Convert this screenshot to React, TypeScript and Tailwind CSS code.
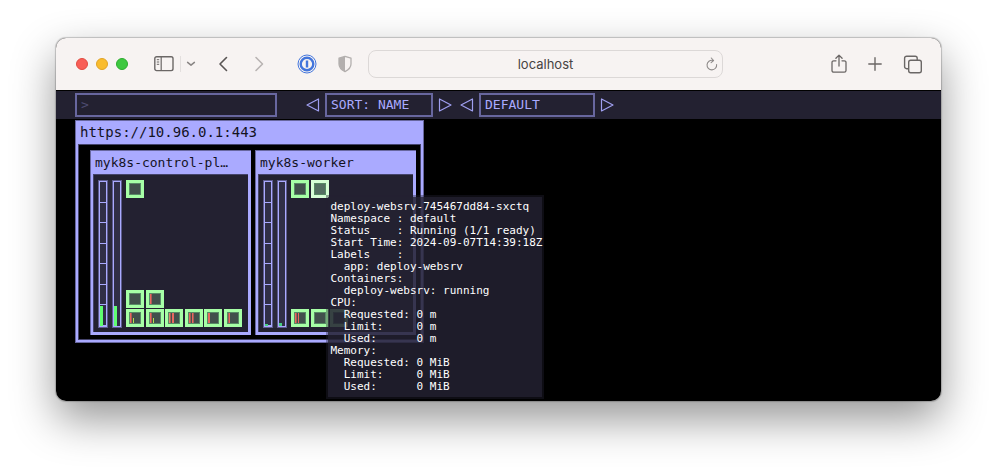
import type { ReactNode } from 'react';

type Stripe = { x: number; h: number; color: string };
type PodInfo = { id: string; stripes?: Stripe[]; active?: boolean };

const RED = '#e8685f';
const DIM_RED = '#a65a55';
const LIME = '#b4e04c';

const controlPlaneRows: PodInfo[][] = [
  [{ id: 'kube-proxy' }, { id: 'flannel', stripes: [{ x: 0, h: 12, color: RED }, { x: 1, h: 12, color: DIM_RED }] }],
  [
    { id: 'apiserver', stripes: [{ x: 0, h: 12, color: RED }, { x: 1, h: 12, color: DIM_RED }, { x: 3, h: 5, color: LIME }] },
    { id: 'etcd', stripes: [{ x: 0, h: 12, color: RED }, { x: 1, h: 12, color: DIM_RED }, { x: 3, h: 5, color: LIME }] },
    { id: 'controller', stripes: [{ x: 0, h: 12, color: '#dd8a70' }, { x: 1, h: 12, color: DIM_RED }, { x: 3, h: 12, color: RED }, { x: 4, h: 12, color: RED }] },
    { id: 'scheduler', stripes: [{ x: 0, h: 12, color: RED }, { x: 1, h: 12, color: DIM_RED }, { x: 3, h: 12, color: RED }, { x: 4, h: 12, color: DIM_RED }] },
    { id: 'coredns-a', stripes: [{ x: 0, h: 12, color: RED }, { x: 1, h: 12, color: RED }] },
    { id: 'coredns-b', stripes: [{ x: 0, h: 12, color: DIM_RED }, { x: 1, h: 12, color: RED }] },
  ],
];

const workerRows: PodInfo[][] = [
  [
    { id: 'worker-flannel', stripes: [{ x: 0, h: 12, color: RED }, { x: 1, h: 12, color: DIM_RED }, { x: 3, h: 12, color: RED }] },
    { id: 'worker-proxy' },
    { id: 'worker-ops' },
  ],
];

const tooltipText = `deploy-websrv-745467dd84-sxctq
Namespace : default
Status    : Running (1/1 ready)
Start Time: 2024-09-07T14:39:18Z
Labels    :
  app: deploy-websrv
Containers:
  deploy-websrv: running
CPU:
  Requested: 0 m
  Limit:     0 m
  Used:      0 m
Memory:
  Requested: 0 MiB
  Limit:     0 MiB
  Used:      0 MiB`;

function IconButton({ label, className, children }: { label: string; className: string; children: ReactNode }) {
  return (
    <button type="button" aria-label={label} className={`flex h-6 shrink-0 items-center justify-center ${className}`}>
      {children}
    </button>
  );
}

function BrowserBar() {
  return (
    <header className="grid h-13 grid-cols-[312px_1fr_218px] items-center bg-[#f7f3f2] text-[#6b6766]">
      <div className="flex items-center pl-5">
        <div className="flex gap-2">
          <button type="button" aria-label="Close" className="size-3 rounded-full border border-[#e24b41] bg-[#f85e57]" />
          <button type="button" aria-label="Minimise" className="size-3 rounded-full border border-[#e1a325] bg-[#f9bc2e]" />
          <button type="button" aria-label="Maximise" className="size-3 rounded-full border border-[#2dac2f] bg-[#3ec840]" />
        </div>
        <IconButton label="Sidebar" className="ml-6 w-6">
          <svg width="20" height="16" viewBox="0 0 20 16" fill="none" stroke="currentColor" strokeWidth="1.4">
            <rect x="0.8" y="0.8" width="18.2" height="13.8" rx="1.8" />
            <path d="M7.2 1v13.6" strokeWidth="1.2" />
            <path d="M2.8 3.7h2.4M2.8 6h2.4M2.8 8.3h2.4" strokeWidth="1" />
          </svg>
        </IconButton>
        <span className="ml-1 h-4 w-px bg-[#e3dfde]" />
        <IconButton label="Tab groups" className="ml-1 w-3">
          <svg width="10" height="6" viewBox="0 0 10 6" fill="none" stroke="#8a8685" strokeWidth="1.5" strokeLinecap="round" strokeLinejoin="round">
            <path d="M1.6 1.4 5 4.2l3.4-2.8" />
          </svg>
        </IconButton>
        <IconButton label="Back" className="ml-4 w-5">
          <svg width="10" height="16" viewBox="0 0 10 16" fill="none" stroke="#595554" strokeWidth="1.6" strokeLinecap="round" strokeLinejoin="round">
            <path d="M8.500 1.500 2 8l6.500 6.500" />
          </svg>
        </IconButton>
        <IconButton label="Forward" className="ml-4 w-5">
          <svg width="10" height="16" viewBox="0 0 10 16" fill="none" stroke="#b8b4b3" strokeWidth="1.6" strokeLinecap="round" strokeLinejoin="round">
            <path d="M2 1.5 8.5 8 2 14.5" />
          </svg>
        </IconButton>
        <IconButton label="Password manager" className="ml-7 w-5">
          <svg width="20" height="20" viewBox="0 0 20 20" fill="none" stroke="#4375dc">
            <circle cx="10" cy="10" r="9" strokeWidth="1" />
            <circle cx="10" cy="10" r="6.3" strokeWidth="2.4" />
            <path d="M10 6.6v6.8" strokeWidth="2.4" />
          </svg>
        </IconButton>
        <IconButton label="Privacy report" className="ml-4 w-6">
          <svg width="16" height="18" viewBox="0 0 16 18">
            <path d="M8 1.3 14 3.2V9c0 3.4-2.4 5.8-6 7.6C4.400 14.800 2 12.400 2 9V3.200Z" fill="none" stroke="#b3afae" strokeWidth="1.3" strokeLinejoin="round" />
            <path d="M8 1.300V16.600C4.400 14.800 2 12.400 2 9V3.200Z" fill="#b3afae" />
          </svg>
        </IconButton>
      </div>

      <div className="grid h-7 grid-cols-[20px_1fr_20px] items-center rounded-lg border border-[#dcd8d7]">
        <span />
        <input
          aria-label="Address"
          defaultValue="localhost"
          className="min-w-0 bg-transparent pt-px text-center font-['Inter','Liberation_Sans',sans-serif] text-[13px] text-[#474342] outline-none"
        />
        <button type="button" aria-label="Reload" className="flex justify-center">
          <svg width="12" height="14" viewBox="0 0 12 14" fill="none" stroke="#8f8b8a" strokeWidth="1.1" strokeLinecap="round" strokeLinejoin="round">
            <path d="M10.600 7.500A4.800 4.800 0 1 1 6.800 3.400" />
            <path d="M5.300 1 7.600 3.500 5.100 5.600" />
          </svg>
        </button>
      </div>

      <div className="flex items-center justify-end gap-4 pr-4">
        <IconButton label="Share" className="w-5">
          <svg width="16" height="20" viewBox="0 0 16 20" fill="none" stroke="currentColor" strokeWidth="1.3" strokeLinecap="round" strokeLinejoin="round">
            <path d="M5 6.800H2.700A1.700 1.700 0 0 0 1 8.500v8A1.700 1.700 0 0 0 2.700 18.200h10.600A1.700 1.700 0 0 0 15 16.500v-8A1.700 1.700 0 0 0 13.300 6.800H11M8 12V1.200M4.900 4.200 8 1.100l3.100 3.100" />
          </svg>
        </IconButton>
        <IconButton label="New tab" className="w-5">
          <svg width="14" height="14" viewBox="0 0 14 14" fill="none" stroke="currentColor" strokeWidth="1.4" strokeLinecap="round">
            <path d="M7 .8v12.400M.8 7h12.400" />
          </svg>
        </IconButton>
        <IconButton label="Tab overview" className="w-6">
          <svg width="20" height="19" viewBox="0 0 20 19" fill="none" stroke="currentColor" strokeWidth="1.400" strokeLinejoin="round">
            <rect x="5.700" y="5.200" width="12.600" height="12.600" rx="2" />
            <path d="M5.500 13.700H3.600a2 2 0 0 1-2-2V3.200a2 2 0 0 1 2-2h8.600a2 2 0 0 1 2 2v1.800" />
          </svg>
        </IconButton>
      </div>
    </header>
  );
}

function Arrow({ dir, label }: { dir: 'left' | 'right'; label: string }) {
  return (
    <button type="button" aria-label={label} className="flex h-6 w-4 items-center justify-center">
      <svg width="14" height="14" viewBox="0 0 14 14" fill="none" stroke="#9f9ff0" strokeWidth="1.200" strokeLinejoin="round">
        <path d={dir === 'left' ? 'M12.500 1v12L1 7Z' : 'M1.500 1v12L13 7Z'} />
      </svg>
    </button>
  );
}

function Toolbar() {
  return (
    <div className="flex h-[29px] items-center border-t border-black bg-[#232131] pb-px pl-[19px] text-[13px] text-[#aaaaff]">
      <input
        aria-label="Filter"
        placeholder=">"
        className="h-6 w-[202px] border-2 border-[#68679f] bg-transparent px-1 outline-none placeholder:text-[#4d4b70]"
      />
      <div className="ml-7 flex items-center gap-1">
        <Arrow dir="left" label="Previous sort" />
        <output className="flex h-6 w-[108px] items-center border-2 border-[#68679f] pl-1">SORT: NAME</output>
        <Arrow dir="right" label="Next sort" />
      </div>
      <div className="ml-[6px] flex items-center gap-1">
        <Arrow dir="left" label="Previous theme" />
        <output className="flex h-6 w-[116px] items-center border-2 border-[#68679f] pl-1">DEFAULT</output>
        <Arrow dir="right" label="Next theme" />
      </div>
    </div>
  );
}

function Gauge({ fill, color, ticks }: { fill: number; color: string; ticks?: boolean }) {
  return (
    <div className="flex w-[10px] border border-[#5d5c8e]">
      <div className="relative flex flex-1 flex-col border border-[#aaaaff] bg-[#302f47]">
        {ticks &&
          [0, 1, 2, 3, 4, 5, 6].map((n) => (
            <div key={n} className="flex-1 border-b border-[#aaaaff] last:border-b-0" />
          ))}
        <div className="absolute bottom-0 left-0 w-[3px]" style={{ height: fill, backgroundColor: color }} />
      </div>
    </div>
  );
}

function Pod({ pod, children }: { pod: PodInfo; children?: ReactNode }) {
  return (
    <div
      className={`relative size-[18px] border-3 ${pod.active ? 'border-[#d6ffd6] bg-[#547062]' : 'border-[#a6ffa6] bg-[#41504c]'}`}
    >
      <div className="relative size-3 border border-[#588a66]">
        {pod.stripes?.map((s) => (
          <span
            key={s.x}
            className="absolute bottom-0 w-px"
            style={{ left: s.x, height: Math.min(s.h, 10), backgroundColor: s.color }}
          />
        ))}
      </div>
      {children}
    </div>
  );
}

function PodRow({ children }: { children: ReactNode }) {
  return <div className="grid w-[117px] grid-cols-6">{children}</div>;
}

function NodeCard({
  name,
  top,
  rows,
  cpu,
  memory,
  color,
}: {
  name: string;
  top: ReactNode;
  rows: PodInfo[][];
  cpu: number;
  memory: number;
  color: string;
}) {
  return (
    <section className="w-[161px] border-t border-l border-[#68679f] bg-[#aaaaff] pr-[3px] pb-[3px] pl-[2px]">
      <h2 className="h-[23px] overflow-hidden pl-[2px] text-[13px] leading-6 text-ellipsis whitespace-nowrap text-[#14131f]">{name}</h2>
      <div className="flex gap-1 border-t border-l border-[#45446b] bg-[#232131] pt-[5px] pb-1 pl-1">
        <div className="flex h-[148px] gap-1 bg-[#2a293b]">
          <Gauge fill={cpu} color={color} ticks />
          <Gauge fill={memory} color={color} />
        </div>
        <div className="flex flex-col justify-between pb-px">
          {top}
          <div className="flex flex-col gap-px">
            {rows.map((row) => (
              <PodRow key={row[0].id}>
                {row.map((pod) => (
                  <Pod key={pod.id} pod={pod} />
                ))}
              </PodRow>
            ))}
          </div>
        </div>
      </div>
    </section>
  );
}

function Cluster() {
  return (
    <section className="w-[349px] border border-[#68679f] bg-[#aaaaff] px-[2px] pb-[2px] text-[#14131f]">
      <h1 className="h-[23px] pl-[2px] text-[14px] leading-[22px]">https://10.96.0.1:443</h1>
      <div className="flex gap-1 border border-[#45446b] bg-black pt-[5px] pb-1 pl-[11px]">
        <NodeCard
          name="myk8s-control-pl…"
          cpu={20}
          memory={20}
          color="#5fff70"
          rows={controlPlaneRows}
          top={
            <PodRow>
              <Pod pod={{ id: 'control-app' }} />
            </PodRow>
          }
        />
        <NodeCard
          name="myk8s-worker"
          cpu={2}
          memory={3}
          color="#46cf80"
          rows={workerRows}
          top={
            <PodRow>
              <Pod pod={{ id: 'websrv-a' }} />
              <Pod pod={{ id: 'websrv-b', active: true }}>
                <pre
                  role="tooltip"
                  className="absolute top-3 left-3 z-10 w-[218px] border-2 border-[#232131]/40 bg-[#232131]/85 bg-clip-padding py-1 pl-[3px] font-[inherit] text-[11px] leading-3 text-white"
                >
                  {tooltipText}
                </pre>
              </Pod>
            </PodRow>
          }
        />
      </div>
    </section>
  );
}

export default function App() {
  return (
    <div className="flex min-h-screen flex-col bg-white px-14 pt-[38px] pb-[74px]">
      <div className="flex flex-1 flex-col rounded-[10px] shadow-[0_0_1px_1px_rgba(0,0,0,0.2),0_18px_44px_rgba(0,0,0,0.42)]">
        <div className="flex flex-1 flex-col overflow-hidden rounded-[10px] bg-black">
          <BrowserBar />
          <main className="flex flex-1 flex-col font-['DejaVu_Sans_Mono','Liberation_Mono',monospace]">
            <Toolbar />
            <div className="pt-px pl-[19px]">
              <Cluster />
            </div>
          </main>
        </div>
      </div>
    </div>
  );
}
